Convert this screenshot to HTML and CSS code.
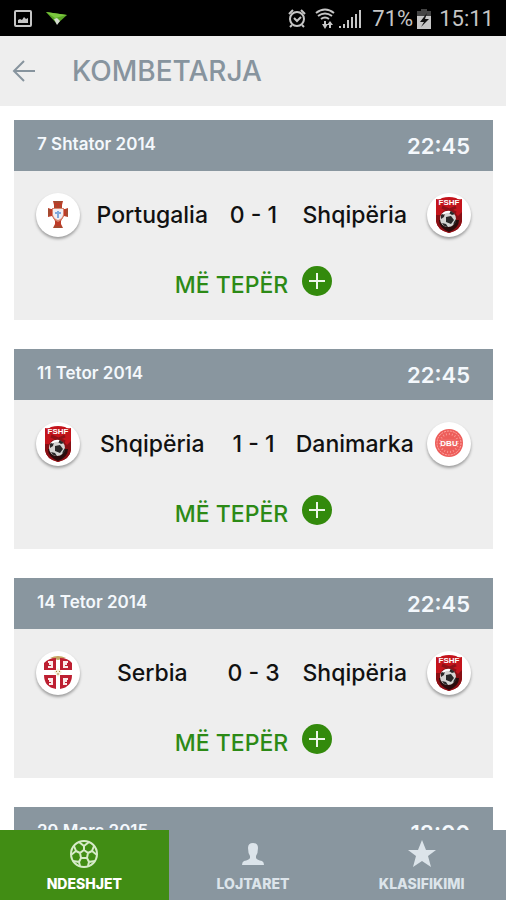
FILE: index.html
```html
<!DOCTYPE html>
<html lang="sq">
<head>
<meta charset="utf-8">
<meta name="viewport" content="width=device-width, initial-scale=1">
<title>Kombetarja</title>
<link rel="stylesheet" href="styles.css">
</head>
<body>
<svg class="sprite" aria-hidden="true">
  <symbol id="albania" viewBox="0 0 44 44">
    <path d="M9 6q4 1 6-1 7-2 14 0 2 2 6 1v22q-1 9-13 12Q10 37 9 28z" fill="#c4141c"/>
    <path d="M9 22h4l4-4h9l5 5 4-4v9q-1 9-13 12Q10 37 9 28z" fill="#870f14"/>
    <path d="M12 27q0 8 10 12 10-4 10-12z" fill="#2a0c0c"/>
    <path d="M15 14l14 6M29 14l-13 6" stroke="#8d1016" stroke-width="3"/>
    <text x="22" y="12" text-anchor="middle" class="crest-text">FSHF</text>
    <circle cx="21" cy="26" r="8" fill="#d5d5d3"/>
    <path d="M19 24l5-1 3 4-3 4-5-2zM14 22l4-2-1 4-3 2zM24 18l4 3-3 1-3-2zM15 30l4 1 2 3q-4 0-6-4zM27 29l2-3q1 4-3 6z" fill="#292929"/>
    <path d="M16 21q3-3 7-2" fill="none" stroke="#fff" stroke-width="2"/>
  </symbol>
  <symbol id="portugal" viewBox="0 0 44 44">
    <path d="M17 8h10l-1 4v4h3l3-1v9l-4-1-3 5v3l2 4H17l2-4v-3l-3-5-4 1v-9l3 1h3v-4z" fill="#bd3b27"/>
    <path d="M18 9h8M13 16v7M31 16v7M18 34h8M20 12v4M24 12v4" fill="none" stroke="#8b5a38"/>
    <path d="M16 15h12v7q-1 5-6 7-5-2-6-7z" fill="#d9866f"/>
    <path d="M17 16h10v6q-1 4-5 5-4-1-5-5z" fill="#f0eef4"/>
    <path d="M22 18v7M19 20h6" stroke="#7fa9dd" stroke-width="2"/>
  </symbol>
  <symbol id="denmark" viewBox="0 0 44 44">
    <circle cx="22" cy="21" r="14" fill="#ed5d5a"/>
    <circle cx="22" cy="21" r="12" fill="none" stroke="#ffaaa5" stroke-dasharray="2 1"/>
    <circle cx="22" cy="21" r="9" fill="none" stroke="#f99590" stroke-width="2" stroke-dasharray="1 2"/>
    <path d="M14 17h16v8H14z" fill="#ef6764"/>
    <text x="22" y="24" text-anchor="middle" class="crest-text">DBU</text>
  </symbol>
  <symbol id="serbia" viewBox="0 0 44 44">
    <path d="M14 7q8-4 16 0l-8 2z" fill="#c4a461"/>
    <path d="M8 19v-7q5-5 12-5v12zM24 19V7q8 0 12 5v7zM8 24h12v14Q8 36 8 24zM24 24h12q0 12-12 14z" fill="#bd1f31"/>
    <path d="M12 11h4v5h-4M16 13h-3M32 11h-4v5h4M28 13h3M12 28h4v5h-3M16 30h-3M32 28h-4v5h3M28 30h3" fill="none" stroke="#fbe9e9" stroke-width="2"/>
    <path d="M18 21l4-4 4 4-4 5z" fill="#f5efd9"/>
    <path d="M20 20l1 1M24 20l-1 1M21 23h2" stroke="#a98c47"/>
  </symbol>
  <symbol id="plus" viewBox="0 0 30 30">
    <circle cx="15" cy="15" r="15" fill="#338a0c"/>
    <path d="M15 7v16M7 15h16" stroke="#eef6ea" stroke-width="2"/>
  </symbol>
</svg>

<div class="status">
  <svg class="status-left" viewBox="0 0 54 20" aria-hidden="true">
    <rect x="1" y="2" width="16" height="15" rx="1" fill="none" stroke="#c6c6c6" stroke-width="2"/>
    <path d="M4 14v-3l2-1 2 1 2-3 2 2 2-1v5z" fill="#c6c6c6"/>
    <path d="M32 3l21 3-10 9z" fill="#59a526"/>
    <path d="M32 3l21 3-12 3z" fill="#7bc73e"/>
    <path d="M40 10l3-1 3 3-3 4z" fill="#d5dbd1"/>
  </svg>
  <div class="status-right">
    <svg class="status-icons" viewBox="0 0 74 22" aria-hidden="true">
      <g fill="none" stroke="#c6c6c6" stroke-width="2">
        <circle cx="9" cy="11" r="7"/>
        <path d="M6 10l3 3 4-4M1 6l4-4M17 6l-4-4M4 17l-2 2M14 17l2 2"/>
        <path d="M28 5q9-7 18 0M30 8q7-5 14 0M33 11q4-3 8 0"/>
        <path d="M37 13v6M42 14v6"/>
      </g>
      <path d="M34 16h6l-3 5zM39 17l3-4 3 4z" fill="#c6c6c6"/>
      <path d="M51 20v-2h2v2zM55 20v-4h2v4zM59 20v-8h2v8zM63 20V9h2v11zM67 20V6h2v14zM71 20V2h2v18z" fill="#c6c6c6"/>
    </svg>
    <span class="level">71%</span>
    <svg class="battery" viewBox="0 0 14 20" aria-hidden="true">
      <path d="M4 0h6v2h4v7H0V2h4z" fill="#444"/>
      <path d="M0 7h14v13H0z" fill="#c6c6c6"/>
      <path d="M10 4l-7 9h4l-3 5 8-8H8z" fill="#111"/>
    </svg>
    <span>15:11</span>
  </div>
</div>

<header class="bar">
  <button class="back" type="button" aria-label="Kthehu">
    <svg viewBox="0 0 24 22"><path d="M12 1L2 11l10 10M2 11h21" fill="none" stroke="#87949e" stroke-width="2"/></svg>
  </button>
  <h1>KOMBETARJA</h1>
</header>

<main class="matches">
  <article class="card">
    <div class="card-head"><span>7 Shtator 2014</span><time>22:45</time></div>
    <div class="card-body">
      <div class="teams">
        <svg class="crest"><use href="#portugal"/></svg><span>Portugalia</span><span>0 - 1</span><span>Shqipëria</span><svg class="crest"><use href="#albania"/></svg>
      </div>
      <button class="more" type="button"><span>MË TEPËR</span><svg><use href="#plus"/></svg></button>
    </div>
  </article>
  <article class="card">
    <div class="card-head"><span>11 Tetor 2014</span><time>22:45</time></div>
    <div class="card-body">
      <div class="teams">
        <svg class="crest"><use href="#albania"/></svg><span>Shqipëria</span><span>1 - 1</span><span>Danimarka</span><svg class="crest"><use href="#denmark"/></svg>
      </div>
      <button class="more" type="button"><span>MË TEPËR</span><svg><use href="#plus"/></svg></button>
    </div>
  </article>
  <article class="card">
    <div class="card-head"><span>14 Tetor 2014</span><time>22:45</time></div>
    <div class="card-body">
      <div class="teams">
        <svg class="crest"><use href="#serbia"/></svg><span>Serbia</span><span>0 - 3</span><span>Shqipëria</span><svg class="crest"><use href="#albania"/></svg>
      </div>
      <button class="more" type="button"><span>MË TEPËR</span><svg><use href="#plus"/></svg></button>
    </div>
  </article>
  <article class="card">
    <div class="card-head"><span>29 Mars 2015</span><time>18:00</time></div>
  </article>
</main>

<nav class="tabs">
  <a class="tab active" href="#ndeshjet" aria-current="page">
    <svg viewBox="0 0 30 30"><g fill="none" stroke="#d6ebc8" stroke-width="2">
      <circle cx="15" cy="15" r="13"/>
      <path d="M15 11l4 3-1 5h-6l-1-5zM15 11V7M19 14l4-2M18 19l2 4M12 19l-2 4M11 14l-4-2M10 3l5 4 5-4M25 7l-2 5 5 4M26 22l-6 1-1 4M4 22l6 1 1 4M5 7l2 5-5 4"/>
    </g></svg>
    <span>NDESHJET</span>
  </a>
  <a class="tab" href="#lojtaret">
    <svg viewBox="0 0 30 30"><path d="M10 9q0-5 5-5t5 5q0 5-2 8v2q1 2 6 3 2 1 2 4H4q0-3 2-4 5-1 6-3v-2q-2-3-2-8z" fill="#dce4ea"/></svg>
    <span>LOJTARET</span>
  </a>
  <a class="tab" href="#klasifikimi">
    <svg viewBox="0 0 30 30"><path d="M15 1l4 10h10l-8 6 3 11-9-6-9 6 3-11-8-6h10z" fill="#dce4ea"/></svg>
    <span>KLASIFIKIMI</span>
  </a>
</nav>
</body>
</html>
```
FILE: styles.css
```css
* {
  box-sizing: border-box;
}

body {
  margin: 0;
  height: 100vh;
  display: flex;
  flex-direction: column;
  background: #fff;
  color: #111;
  font-family: Inter, "Liberation Sans", sans-serif;
}

button {
  border: 0;
  padding: 0;
  background: none;
  font: inherit;
  cursor: pointer;
}

svg {
  display: block;
  flex: none;
}

.sprite {
  position: absolute;
  width: 0;
  height: 0;
}

.crest-text {
  font: bold 8px "Liberation Sans", sans-serif;
  fill: #fff;
}

.status {
  flex: none;
  height: 36px;
  padding: 2px 12px 0 14px;
  display: flex;
  align-items: center;
  justify-content: space-between;
  background: #000;
  color: #c6c6c6;
  font: 22px/34px Roboto, sans-serif;
}

.status-left {
  width: 54px;
  height: 20px;
}

.status-right {
  display: flex;
  align-items: center;
}

.status-icons {
  width: 74px;
  height: 22px;
  margin-right: 10px;
}

.level {
  margin-right: 4px;
}

.battery {
  width: 14px;
  height: 20px;
  margin-right: 8px;
}

.bar {
  flex: none;
  height: 70px;
  padding: 0 12px;
  display: flex;
  align-items: center;
  gap: 36px;
  background: #eee;
}

.back svg {
  width: 24px;
  height: 22px;
}

h1 {
  margin: 0;
  color: #87949e;
  font-size: 28px;
  font-weight: 500;
}

.matches {
  flex: 1;
  min-height: 0;
  overflow-y: auto;
  scrollbar-width: none;
  padding: 14px 13px 0 14px;
  display: flex;
  flex-direction: column;
  gap: 29px;
}

.card {
  flex: none;
  background: #eee;
}

.card-head {
  height: 51px;
  padding: 0 23px;
  display: flex;
  align-items: center;
  justify-content: space-between;
  background: #89969f;
  color: #f4f8fc;
  font-size: 17px;
  font-weight: 600;
}

.card-head span {
  padding-bottom: 4px;
}

.card-head time {
  font-size: 22px;
}

.card-body {
  padding: 22px 22px 24px;
  display: flex;
  flex-direction: column;
  align-items: center;
  gap: 29px;
}

.teams {
  width: 100%;
  display: grid;
  grid-template-columns: 44px 1fr 58px 1fr 44px;
  align-items: center;
  text-align: center;
  font-size: 23px;
  font-weight: 500;
}

.crest {
  width: 44px;
  height: 44px;
  border-radius: 50%;
  background: #fff;
  box-shadow: 0 2px 3px rgba(0, 0, 0, 0.35);
}

.more {
  display: flex;
  align-items: center;
  gap: 14px;
  color: #2c8a16;
  font-size: 23px;
  font-weight: 500;
  line-height: 30px;
}

.more span {
  padding-top: 4px;
  margin-bottom: -4px;
}

.more svg {
  width: 30px;
  height: 30px;
}

.tabs {
  flex: none;
  height: 70px;
  display: grid;
  grid-template-columns: repeat(3, 1fr);
  background: #89969f;
}

.tab {
  padding-top: 9px;
  display: flex;
  flex-direction: column;
  align-items: center;
  gap: 6px;
  color: #dce4ea;
  font-size: 14px;
  font-weight: 800;
  line-height: 18px;
  text-decoration: none;
}

.tab svg {
  width: 30px;
  height: 30px;
}

.tab.active {
  background: #418d14;
  color: #fff;
}
```
